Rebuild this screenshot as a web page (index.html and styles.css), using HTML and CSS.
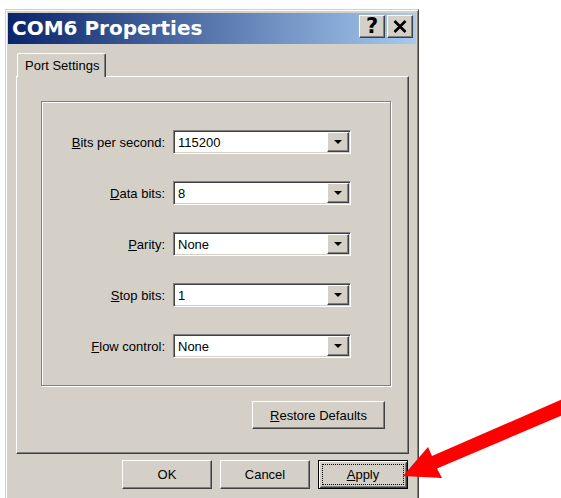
FILE: index.html
```html
<!DOCTYPE html>
<html lang="en">
<head>
<meta charset="utf-8">
<title>COM6 Properties</title>
<link rel="stylesheet" href="styles.css">
</head>
<body>
<div class="window">
  <div class="titlebar">
    <span class="title">COM6 Properties</span>
    <div class="caption-buttons">
      <button class="cap-btn help">?</button>
      <button class="cap-btn close" aria-label="Close">
        <svg width="14" height="13" viewBox="0 0 14 13"><path d="M1.5 1 L12.5 12 M12.5 1 L1.5 12" stroke="#000" stroke-width="2.6" fill="none"/></svg>
      </button>
    </div>
  </div>
  <div class="client">
    <div class="tabs">
      <div class="tab active">Port Settings</div>
    </div>
    <div class="tab-panel">
      <div class="group">
        <div class="row">
          <label class="field-label"><u>B</u>its per second:</label>
          <div class="combo"><span class="combo-value">115200</span><span class="drop"><i class="caret"></i></span></div>
        </div>
        <div class="row">
          <label class="field-label"><u>D</u>ata bits:</label>
          <div class="combo"><span class="combo-value">8</span><span class="drop"><i class="caret"></i></span></div>
        </div>
        <div class="row">
          <label class="field-label"><u>P</u>arity:</label>
          <div class="combo"><span class="combo-value">None</span><span class="drop"><i class="caret"></i></span></div>
        </div>
        <div class="row">
          <label class="field-label"><u>S</u>top bits:</label>
          <div class="combo"><span class="combo-value">1</span><span class="drop"><i class="caret"></i></span></div>
        </div>
        <div class="row">
          <label class="field-label"><u>F</u>low control:</label>
          <div class="combo"><span class="combo-value">None</span><span class="drop"><i class="caret"></i></span></div>
        </div>
      </div>
      <div class="panel-actions">
        <button class="btn restore"><u>R</u>estore Defaults</button>
      </div>
    </div>
    <div class="dialog-actions">
      <button class="btn">OK</button>
      <button class="btn">Cancel</button>
      <button class="btn default"><span class="focus"><u>A</u>pply</span></button>
    </div>
  </div>
</div>
<svg class="callout" width="561" height="498" viewBox="0 0 561 498">
  <polygon fill="#ff0000" points="403,476 428,447 432,456 572,395 572,411 437,468.5 442,478"/>
</svg>
</body>
</html>
```

FILE: styles.css
```css
* {
  box-sizing: border-box;
}

html,
body {
  margin: 0;
  height: 100%;
  overflow: hidden;
  background: #fff;
}

body {
  position: relative;
  font-family: "Liberation Sans", Arial, sans-serif;
  font-size: 13px;
  color: #000;
}

/* Dialog frame */
.window {
  width: 414px;
  height: 500px;
  margin: 9px 0 0 5px;
  padding: 3px 2px 0 2px;
  background: #d4d0c8;
  border: 1px solid;
  border-color: #d4d0c8 #404040 #404040 #d4d0c8;
  box-shadow: inset 1px 1px #fff, inset -1px -1px #808080;
}

.titlebar {
  height: 31px;
  display: flex;
  justify-content: space-between;
  align-items: flex-start;
  padding: 0 3px 0 4px;
  background: linear-gradient(to right, #0a246a, #a6caf0);
}

.title {
  font-family: "DejaVu Sans", sans-serif;
  font-weight: bold;
  font-size: 20px;
  line-height: 31px;
  color: #fff;
}

.caption-buttons {
  display: flex;
  gap: 2px;
  padding-top: 2px;
}

/* Raised 3D bevel shared by all push buttons */
.cap-btn,
.btn,
.drop {
  background: #d4d0c8;
  border: 1px solid;
  border-color: #fff #404040 #404040 #fff;
  box-shadow: inset -1px -1px #808080, inset 1px 1px #d4d0c8;
}

.cap-btn {
  width: 26px;
  height: 23px;
  padding: 0;
  display: flex;
  align-items: center;
  justify-content: center;
  color: #000;
}

.help {
  font-family: "DejaVu Sans", sans-serif;
  font-weight: bold;
  font-size: 21px;
  line-height: 1;
}

/* Client area */
.client {
  padding: 9px 7px 0 8px;
}

.tabs {
  display: flex;
  height: 23px;
  padding-left: 1px;
}

.tab {
  position: relative;
  z-index: 1;
  width: 89px;
  height: 24px;
  padding: 4px 0 0 7px;
  background: #d4d0c8;
  border-top: 1px solid #fff;
  border-left: 1px solid #fff;
  border-right: 1px solid #404040;
  border-radius: 2px 2px 0 0;
  box-shadow: inset -1px 0 #808080;
  line-height: 16px;
}

.tab-panel {
  width: 393px;
  height: 378px;
  padding: 24px 17px 0 24px;
  border: 1px solid;
  border-color: #fff #404040 #404040 #fff;
  box-shadow: inset -1px -1px #808080;
}

/* Etched frame around the settings */
.group {
  height: 285px;
  padding-top: 28px;
  display: flex;
  flex-direction: column;
  gap: 27px;
  border: 1px solid #808080;
  box-shadow: 1px 1px #fff, inset 1px 1px #fff;
}

.row {
  display: grid;
  grid-template-columns: 123px 178px;
  column-gap: 8px;
  align-items: center;
}

.field-label {
  text-align: right;
}

.combo {
  height: 24px;
  display: flex;
  align-items: center;
  justify-content: space-between;
  padding: 0 1px 0 3px;
  background: #fff;
  border: 1px solid;
  border-color: #808080 #fff #fff #808080;
  box-shadow: inset 1px 1px #404040, inset -1px -1px #d4d0c8;
}

.combo-value {
  padding-left: 1px;
}

.drop {
  width: 22px;
  height: 20px;
  display: flex;
  align-items: center;
  justify-content: center;
}

.caret {
  width: 0;
  height: 0;
  border-left: 4px solid transparent;
  border-right: 4px solid transparent;
  border-top: 4px solid #000;
}

.panel-actions {
  display: flex;
  justify-content: flex-end;
  margin-top: 15px;
  padding-right: 6px;
}

.btn {
  font-family: "Liberation Sans", Arial, sans-serif;
  font-size: 13px;
  color: #000;
  padding: 0;
}

.restore {
  width: 133px;
  height: 28px;
}

.dialog-actions {
  display: flex;
  justify-content: flex-end;
  gap: 8px;
  margin-top: 6px;
  padding-right: 1px;
}

.dialog-actions .btn {
  width: 90px;
  height: 29px;
}

/* Default button: black outline, bevel, dotted focus rectangle */
.dialog-actions .default {
  display: flex;
  padding: 3px;
  border: 1px solid #000;
  box-shadow: inset 1px 1px #fff, inset -1px -1px #404040, inset 2px 2px #d4d0c8, inset -2px -2px #808080;
}

.focus {
  flex: 1;
  display: flex;
  align-items: center;
  justify-content: center;
  border: 1px dotted #000;
}

.callout {
  position: absolute;
  top: 0;
  left: 0;
  pointer-events: none;
}
```
